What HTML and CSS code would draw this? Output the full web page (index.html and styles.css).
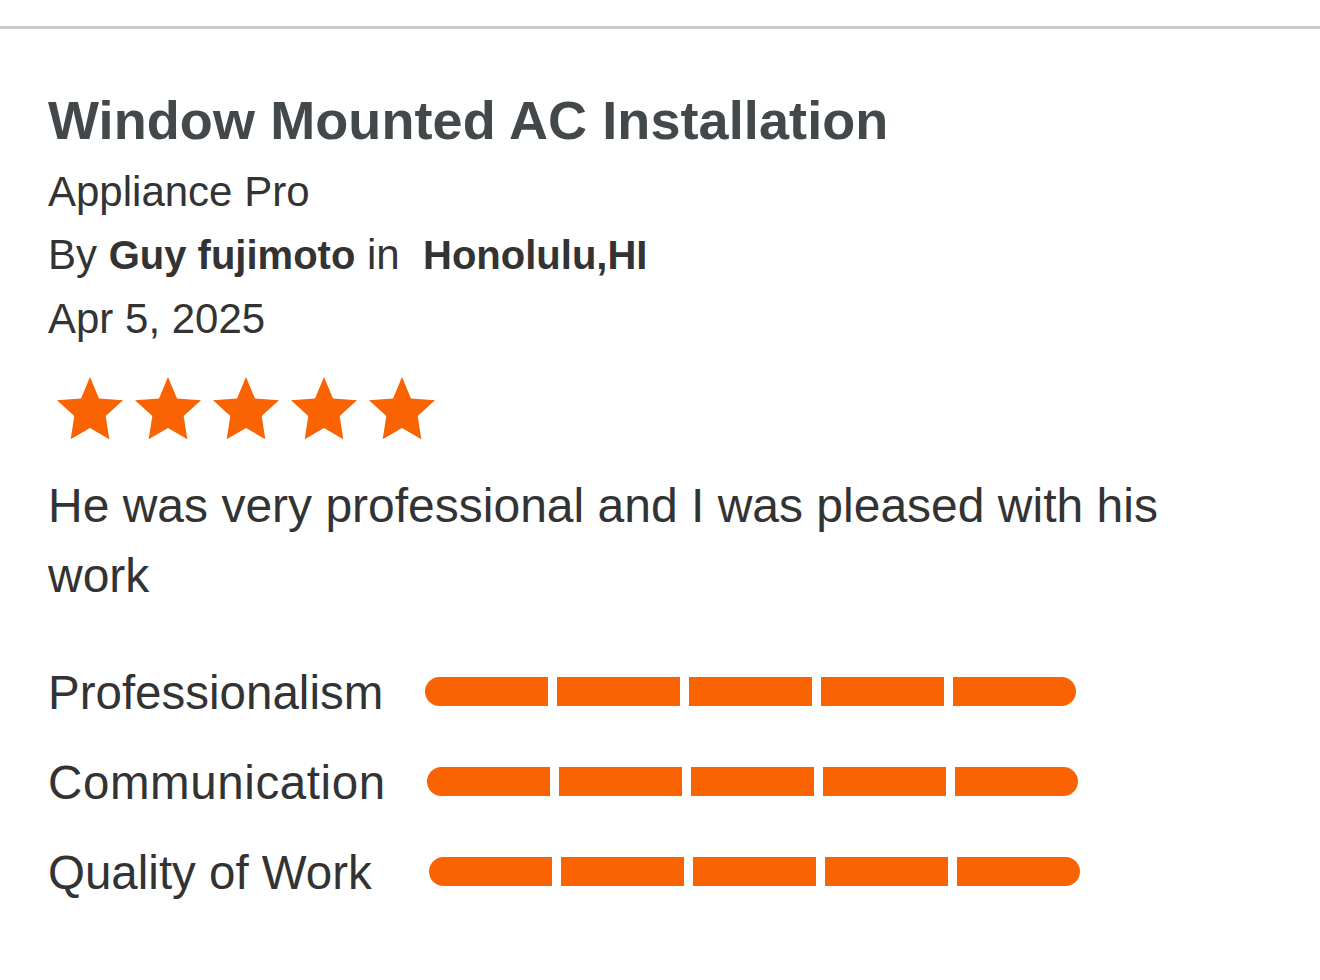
FILE: index.html
```html
<!DOCTYPE html>
<html lang="en">
<head>
<meta charset="utf-8">
<title>Review</title>
<link rel="stylesheet" href="styles.css">
</head>
<body>
<div class="review">
  <h1 class="title">Window Mounted AC Installation</h1>
  <div class="line">Appliance Pro</div>
  <div class="line">By <b class="strong">Guy fujimoto</b> in&nbsp; <b class="strong">Honolulu,HI</b></div>
  <div class="line">Apr 5, 2025</div>
  <div class="stars">
    <svg class="star" viewBox="0 0 66 63"><polygon points="33,0 42,21.6 66,23.3 48.7,39 52.3,62.3 33,51 13.7,62.3 17.3,39 0,23.3 24,21.6"/></svg>
    <svg class="star" viewBox="0 0 66 63"><polygon points="33,0 42,21.6 66,23.3 48.7,39 52.3,62.3 33,51 13.7,62.3 17.3,39 0,23.3 24,21.6"/></svg>
    <svg class="star" viewBox="0 0 66 63"><polygon points="33,0 42,21.6 66,23.3 48.7,39 52.3,62.3 33,51 13.7,62.3 17.3,39 0,23.3 24,21.6"/></svg>
    <svg class="star" viewBox="0 0 66 63"><polygon points="33,0 42,21.6 66,23.3 48.7,39 52.3,62.3 33,51 13.7,62.3 17.3,39 0,23.3 24,21.6"/></svg>
    <svg class="star" viewBox="0 0 66 63"><polygon points="33,0 42,21.6 66,23.3 48.7,39 52.3,62.3 33,51 13.7,62.3 17.3,39 0,23.3 24,21.6"/></svg>
  </div>
  <p class="text">He was very professional and I was pleased with his work</p>
  <div class="ratings">
    <div class="row">
      <span class="label">Professionalism</span>
      <div class="bar"><span class="seg"></span><span class="seg"></span><span class="seg"></span><span class="seg"></span><span class="seg"></span></div>
    </div>
    <div class="row">
      <span class="label label-wide">Communication</span>
      <div class="bar shift1"><span class="seg"></span><span class="seg"></span><span class="seg"></span><span class="seg"></span><span class="seg"></span></div>
    </div>
    <div class="row">
      <span class="label">Quality of Work</span>
      <div class="bar shift2"><span class="seg"></span><span class="seg"></span><span class="seg"></span><span class="seg"></span><span class="seg"></span></div>
    </div>
  </div>
</div>
</body>
</html>
```
FILE: styles.css
```css
html, body {
  margin: 0;
  padding: 0;
  background: #ffffff;
}
body {
  font-family: "Liberation Sans", Arial, Helvetica, sans-serif;
  color: #333333;
}
.review {
  margin-top: 26px;
  border-top: 3px solid #c8cbcc;
  padding: 59px 48px 40px 48px;
}
.title {
  margin: 0 0 8px 0;
  font-size: 54px;
  line-height: 64px;
  font-weight: 700;
  color: #43484b;
  letter-spacing: 0.1px;
}
.line {
  font-size: 42px;
  line-height: 63px;
  white-space: nowrap;
}
.strong {
  font-weight: 700;
  font-size: 40px;
}
.stars {
  display: flex;
  gap: 12px;
  margin-top: 27px;
  padding-left: 9px;
  height: 63px;
}
.star {
  width: 66px;
  height: 63px;
  fill: #f96302;
}
.text {
  margin: 31px 0 0 0;
  font-size: 48px;
  line-height: 70px;
  max-width: 1160px;
}
.ratings {
  margin-top: 35px;
  display: flex;
  flex-direction: column;
}
.row {
  display: grid;
  grid-template-columns: 377px auto;
  align-items: center;
  height: 90px;
}
.label {
  font-size: 47.5px;
  line-height: 56px;
  white-space: nowrap;
  position: relative;
  top: 2px;
}
.label-wide {
  letter-spacing: 0.6px;
}
.bar {
  display: flex;
  gap: 9px;
  width: 651px;
  height: 29px;
}
.shift1 { margin-left: 2px; }
.shift2 { margin-left: 4px; }
.seg {
  flex: 1;
  background: #f96302;
}
.seg:first-child {
  border-radius: 14.5px 0 0 14.5px;
}
.seg:last-child {
  border-radius: 0 14.5px 14.5px 0;
}
```
